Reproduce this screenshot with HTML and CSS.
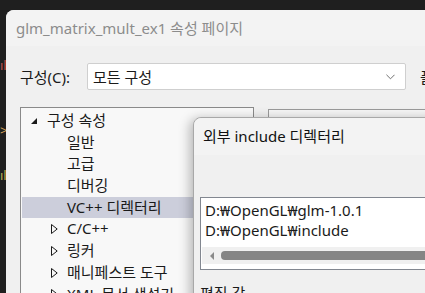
FILE: index.html
```html
<!DOCTYPE html>
<html>
<head>
  <title>glm_matrix_mult_ex1 속성 페이지</title>
  <link rel="stylesheet" href="styles.css">
</head>
<body>
  <div class="desktop">
    <div class="editor-strip">
      <span class="code code-red">ıl</span>
      <span class="code code-orange">&gt;</span>
      <span class="code code-yellow">ıl</span>
    </div>

    <div class="dialog">
      <div class="titlebar">glm_matrix_mult_ex1 속성 페이지</div>

      <div class="config-row">
        <span class="config-label">구성(C):</span>
        <div class="combo">
          <span>모든 구성</span>
          <svg class="chevron" viewBox="0 0 10 6">
            <path d="M0.5 0.5 L5 5 L9.5 0.5"/>
          </svg>
        </div>
        <span class="config-label">플랫폼(P):</span>
      </div>

      <div class="panes">
        <div class="tree">
          <div class="tree-row"><span class="arrow open"></span>구성 속성</div>
          <div class="tree-row child"><span class="arrow"></span>일반</div>
          <div class="tree-row child"><span class="arrow"></span>고급</div>
          <div class="tree-row child"><span class="arrow"></span>디버깅</div>
          <div class="tree-row child selected"><span class="arrow"></span>VC++ 디렉터리</div>
          <div class="tree-row child"><span class="arrow closed"></span>C/C++</div>
          <div class="tree-row child"><span class="arrow closed"></span>링커</div>
          <div class="tree-row child"><span class="arrow closed"></span>매니페스트 도구</div>
          <div class="tree-row child"><span class="arrow closed"></span>XML 문서 생성기</div>
        </div>
        <div class="grid">
          <div class="grid-head">공용 프로젝트 구성</div>
        </div>
      </div>
    </div>

    <div class="subdialog">
      <div class="sub-titlebar">외부 include 디렉터리</div>
      <div class="sub-body">
        <div class="listbox">
          <div class="list-item">D:₩OpenGL₩glm-1.0.1</div>
          <div class="list-item">D:₩OpenGL₩include</div>
          <div class="hscroll">
            <span class="scroll-arrow"></span>
            <span class="scroll-thumb"></span>
          </div>
        </div>
        <div class="sub-label">편집 값</div>
      </div>
    </div>
  </div>
</body>
</html>
```

FILE: styles.css
```css
body {
  margin: 0;
  background-color: #1f1f1f;
  font-family: 'Noto Sans', 'Noto Sans CJK KR', sans-serif;
  font-size: 15px;
  color: #1a1a1a;
}

.desktop {
  position: relative;
  width: 425px;
  height: 293px;
  overflow: hidden;
  display: flex;
}

.editor-strip {
  width: 6px;
  flex-shrink: 0;
  display: flex;
  flex-direction: column;
  overflow: hidden;
  font-size: 13px;
  line-height: 14px;
}

.code {
  display: block;
  white-space: nowrap;
}

.code-red {
  margin-top: 58px;
  color: #c0504d;
}

.code-orange {
  margin-top: 51px;
  color: #d7a55a;
}

.code-yellow {
  margin-top: 31px;
  color: #b8b050;
}

.dialog {
  width: 470px;
  flex-shrink: 0;
  margin-top: 10px;
  background-color: #f0f0f0;
  border-radius: 8px 0 0 0;
  display: flex;
  flex-direction: column;
}

.titlebar {
  height: 36px;
  padding-left: 10px;
  line-height: 36px;
  color: #8c8c8c;
  background-color: #f3f3f3;
  border-radius: 8px 0 0 0;
  white-space: nowrap;
}

.config-row {
  display: flex;
  align-items: center;
  gap: 14px;
  margin-top: 17px;
  padding-left: 14px;
  white-space: nowrap;
}

.config-label {
  width: 53px;
  flex-shrink: 0;
}

.combo {
  width: 302px;
  height: 25px;
  flex-shrink: 0;
  padding: 0 10px 0 5px;
  background-color: #ffffff;
  border: 1px solid #cfcfcf;
  border-radius: 2px;
  display: flex;
  align-items: center;
  justify-content: space-between;
}

.chevron {
  width: 9px;
  height: 6px;
  fill: none;
  stroke: #606060;
  stroke-width: 1;
}

.panes {
  display: flex;
  align-items: flex-start;
  gap: 14px;
  margin-top: 17px;
  padding-left: 14px;
}

.tree {
  width: 230px;
  height: 200px;
  flex-shrink: 0;
  padding: 2px 1px;
  background-color: #f8f8f8;
  border: 1px solid #8a8a8a;
  border-bottom: none;
}

.tree-row {
  height: 21.7px;
  line-height: 21.7px;
  display: flex;
  align-items: center;
  padding-left: 9px;
  white-space: nowrap;
}

.tree-row.child {
  padding-left: 29px;
}

.tree-row.selected {
  background-color: #cccedb;
}

.arrow {
  width: 16px;
  height: 10px;
  flex-shrink: 0;
  position: relative;
}

.arrow.open::before {
  content: "";
  position: absolute;
  left: 0;
  top: 2px;
  border-style: solid;
  border-width: 0 0 6px 6px;
  border-color: transparent transparent #1a1a1a transparent;
}

.arrow.closed::before {
  content: "";
  position: absolute;
  left: 0;
  top: 0;
  width: 7px;
  height: 10px;
  background: url("data:image/svg+xml,%3Csvg xmlns='http://www.w3.org/2000/svg' viewBox='0 0 7 10'%3E%3Cpath d='M0.5 0.5 L6.2 5 L0.5 9.5 Z' fill='none' stroke='%231a1a1a'/%3E%3C/svg%3E");
}

.grid {
  width: 200px;
  height: 200px;
  flex-shrink: 0;
  margin-top: 2px;
  background-color: #f5f5f5;
  border: 1px solid #9a9a9a;
}

.grid-head {
  padding: 3px 0 0 33px;
  font-weight: 600;
  white-space: nowrap;
}

.subdialog {
  position: absolute;
  left: 193px;
  top: 117px;
  width: 260px;
  height: 200px;
  background-color: #f0f0f0;
  border: 1px solid #a8a8a8;
  border-radius: 8px 0 0 0;
  box-shadow: -3px 2px 12px rgba(0, 0, 0, 0.28);
}

.sub-titlebar {
  height: 37px;
  line-height: 36px;
  padding-left: 9px;
  background-color: #f3f3f3;
  border-radius: 8px 0 0 0;
  white-space: nowrap;
  color: #111111;
}

.sub-body {
  padding: 42px 0 0 6px;
}

.listbox {
  height: 73px;
  padding: 3px 0 0 1px;
  background-color: #ffffff;
  border: 1px solid #828790;
  border-right: none;
  box-sizing: border-box;
}

.list-item {
  height: 19.5px;
  line-height: 19.5px;
  padding-left: 3px;
  white-space: nowrap;
}

.hscroll {
  margin-top: 7px;
  height: 17px;
  background-color: #f0f0f0;
  display: flex;
  align-items: center;
  gap: 7px;
  padding-left: 8px;
}

.scroll-arrow {
  width: 0;
  height: 0;
  border-style: solid;
  border-width: 4px 4px 4px 0;
  border-color: transparent #8a8a8a transparent transparent;
}

.scroll-thumb {
  flex: 1;
  height: 9px;
  background-color: #858585;
  border-radius: 4px 0 0 4px;
}

.sub-label {
  margin-top: 12px;
  white-space: nowrap;
}
```
